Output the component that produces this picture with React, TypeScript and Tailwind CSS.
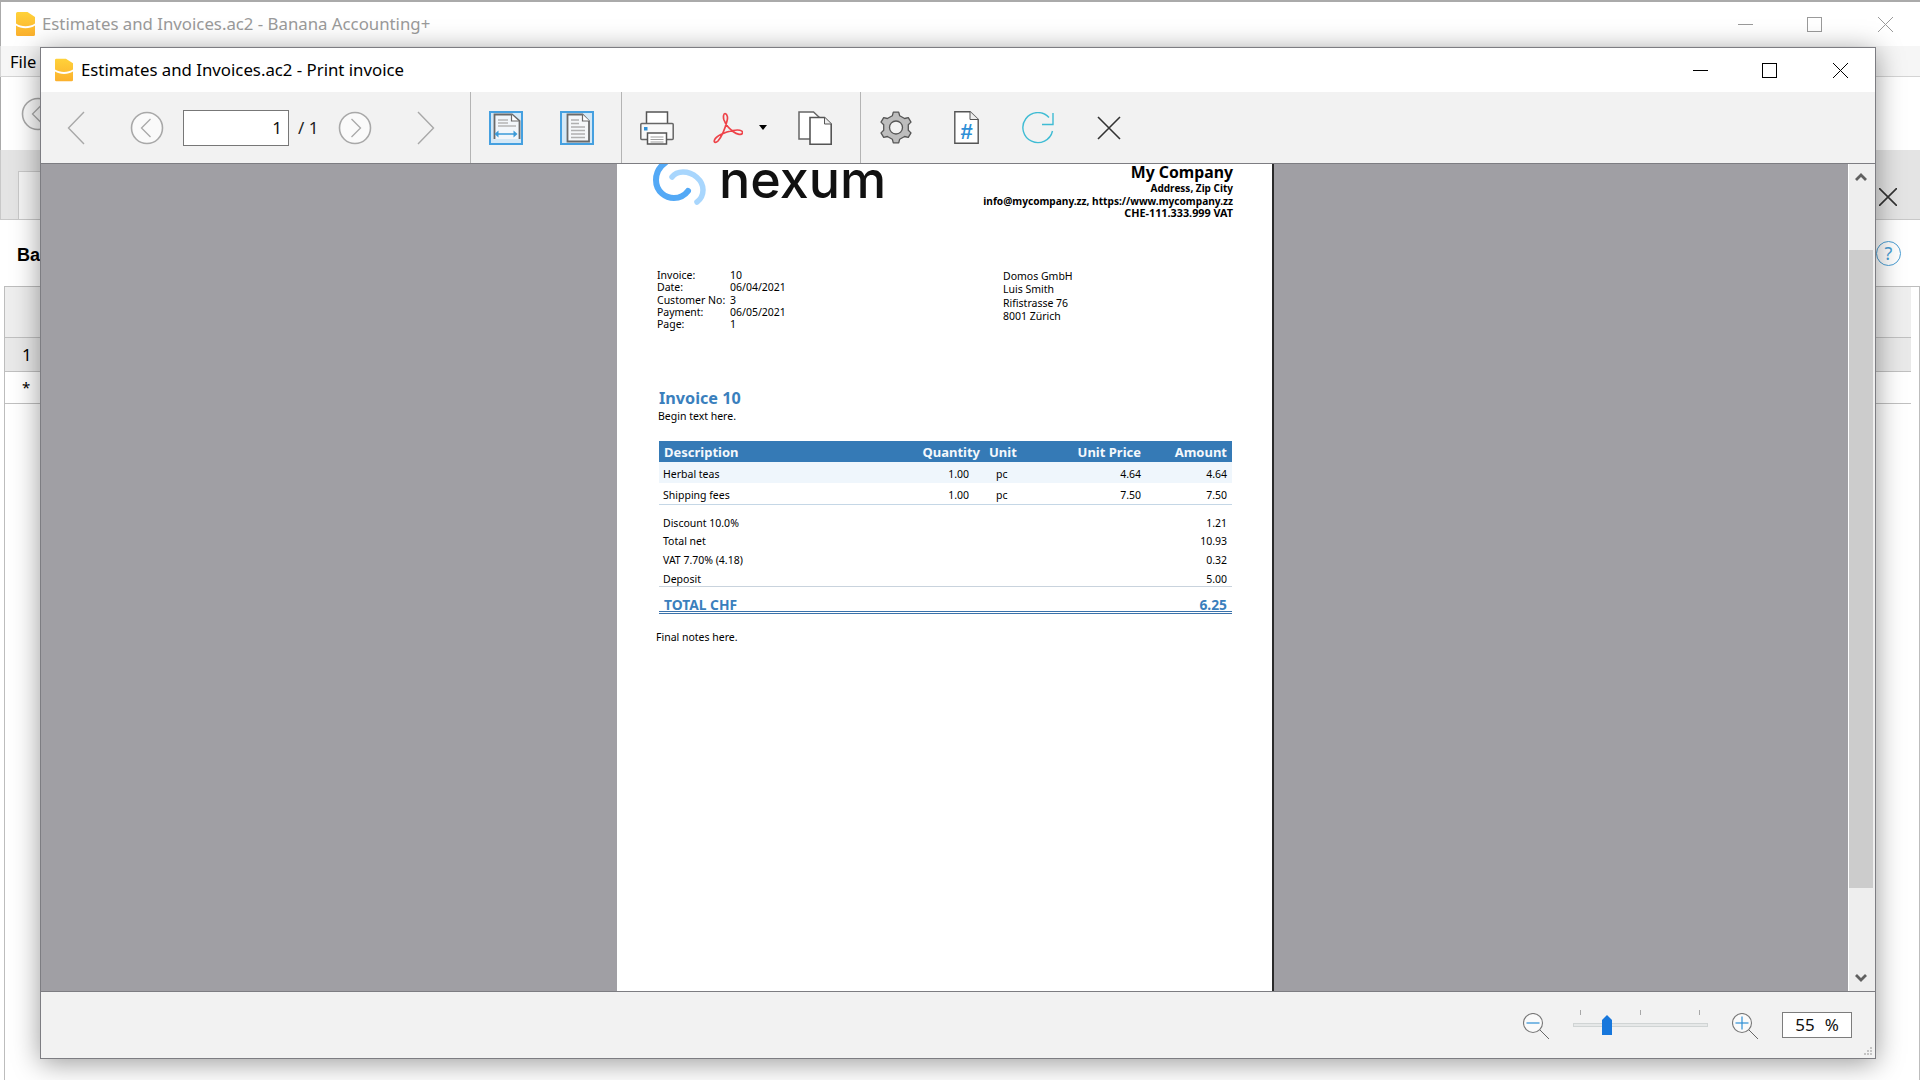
const ui = "font-['Noto_Sans','Open_Sans',sans-serif]";
const doc = "font-['Noto_Sans','Liberation_Sans',sans-serif]";

function BananaIcon({ id, className }: { id: string; className: string }) {
    return (
        <svg viewBox="0 0 19 24" className={className}>
            <defs>
                <linearGradient id={id} x1="0" y1="0" x2="0" y2="1">
                    <stop offset="0" stopColor="#ffd23a" />
                    <stop offset="1" stopColor="#fbb02d" />
                </linearGradient>
            </defs>
            <path d="M1.5 0H11.5L19 5V22.5A1.5 1.5 0 0 1 17.5 24H1.5A1.5 1.5 0 0 1 0 22.5V1.5A1.5 1.5 0 0 1 1.5 0Z" fill={`url(#${id})`} />
            <path d="M0 11.5C5 15 14 15 19 11.5V13.5C14 17 5 17 0 13.5Z" fill="#ffffff" />
        </svg>
    );
}

function WindowControls({ gapA, gapB, right }: { gapA: string; gapB: string; right: string }) {
    return (
        <div className={`ml-auto flex items-center ${right}`}>
            <svg viewBox="0 0 15 15" className="h-[15px] w-[15px]">
                <path d="M0 7.5H15" stroke="currentColor" strokeWidth="1" />
            </svg>
            <svg viewBox="0 0 15 15" className={`h-[15px] w-[15px] ${gapA}`}>
                <rect x="0.5" y="0.5" width="14" height="14" fill="none" stroke="currentColor" strokeWidth="1" />
            </svg>
            <svg viewBox="0 0 15 15" className={`h-[15px] w-[15px] ${gapB}`}>
                <path d="M0 0L15 15M15 0L0 15" stroke="currentColor" strokeWidth="1" />
            </svg>
        </div>
    );
}

function GearIcon() {
    // six-lobed gear, corners computed from the angle
    const pts: string[] = [];
    for (let i = 0; i < 6; i++) {
        const a = (Math.PI / 3) * i + Math.PI / 6;
        [-0.3, -0.17, 0.17, 0.3].forEach((d, j) => {
            const r = j === 0 || j === 3 ? 12.6 : 16;
            pts.push(`${(17 + r * Math.cos(a + d)).toFixed(1)},${(16.5 + r * 0.97 * Math.sin(a + d)).toFixed(1)}`);
        });
    }
    return (
        <svg viewBox="0 0 34 33" className="h-[33px] w-[34px]">
            <polygon points={pts.join(' ')} fill="#bdbdbd" stroke="#555555" strokeWidth="1.3" strokeLinejoin="round" />
            <circle cx="17" cy="16.5" r="6.5" fill="#f2f2f2" stroke="#555555" strokeWidth="1.3" />
        </svg>
    );
}

function ToggleButton({ wide }: { wide?: boolean }) {
    return (
        <div className="flex h-[34px] w-[34px] items-center justify-center border-2 border-[#45a0e0] bg-[#d4e8f6]">
            <svg viewBox="0 0 30 30" className="h-[30px] w-[30px]">
                <path
                    d={wide ? 'M3.5 26V1.5H21L28.5 8V26' : 'M5.5 28.5V1.5H20.5L27 8V28.5Z'}
                    fill={wide ? '#f2f6fa' : '#f5f7f9'}
                    stroke="#6a6a6a"
                    strokeWidth="1.8"
                />
                <path d="M20.5 1.5V8H27.5" fill="#ffffff" stroke="#6a6a6a" strokeWidth="1.2" />
                {wide ? (
                    <>
                        <path d="M7 7H17M7 10H17M7 13H25" stroke="#b5b5b5" strokeWidth="1.3" />
                        <path d="M5 21H25" stroke="#3a9ad9" strokeWidth="1.5" />
                        <path d="M7.5 17.5L3.5 21L7.5 24.5ZM22.5 17.5L26.5 21L22.5 24.5Z" fill="#3a9ad9" />
                    </>
                ) : (
                    <path d="M9 7H17M9 10.5H17M9 14H23M9 17.5H23M9 21H23M9 24.5H23" stroke="#b0b0b0" strokeWidth="1.4" />
                )}
            </svg>
        </div>
    );
}

function Toolbar() {
    return (
        <div className={`flex h-[71px] shrink-0 items-center bg-[#f2f2f2] ${ui}`}>
            <div className="flex h-full w-[430px] shrink-0 items-center border-r border-[#b4b4b4]">
                <svg viewBox="0 0 18 34" className="ml-[26px] h-[34px] w-[18px]">
                    <path d="M17 1L1.5 17L17 33" fill="none" stroke="#a8a8a8" strokeWidth="1.4" />
                </svg>
                <svg viewBox="0 0 34 34" className="ml-[45px] h-[34px] w-[34px]">
                    <circle cx="17" cy="17" r="15.5" fill="#fafafa" stroke="#a8a8a8" strokeWidth="1.6" />
                    <path d="M20.5 8L11.5 17L20.5 26" fill="none" stroke="#a8a8a8" strokeWidth="1.3" />
                </svg>
                <div className="ml-[19px] flex h-[36px] w-[106px] items-center justify-end border border-[#777777] bg-white pr-[6px] text-[17px] text-[#111111]">
                    1
                </div>
                <span className="ml-[9px] w-[40px] text-[17px] text-[#222222]">/ 1</span>
                <svg viewBox="0 0 34 34" className="h-[34px] w-[34px]">
                    <circle cx="17" cy="17" r="15.5" fill="#fafafa" stroke="#a8a8a8" strokeWidth="1.6" />
                    <path d="M13.5 8L22.5 17L13.5 26" fill="none" stroke="#a8a8a8" strokeWidth="1.3" />
                </svg>
                <svg viewBox="0 0 18 34" className="ml-[45px] h-[34px] w-[18px]">
                    <path d="M1 1L16.5 17L1 33" fill="none" stroke="#a8a8a8" strokeWidth="1.4" />
                </svg>
            </div>

            <div className="flex h-full w-[151px] shrink-0 items-center gap-[37px] border-r border-[#b4b4b4] pl-[18px]">
                <ToggleButton wide />
                <ToggleButton />
            </div>

            <div className="flex h-full w-[239px] shrink-0 items-center border-r border-[#b4b4b4] pl-[18px]">
                <svg viewBox="0 0 34 34" className="h-[34px] w-[34px]">
                    <rect x="6.5" y="1" width="21" height="14" fill="#ffffff" stroke="#555555" strokeWidth="1.5" />
                    <rect x="0.8" y="12.5" width="32.4" height="16" rx="1" fill="#f8f8f8" stroke="#666666" strokeWidth="1.5" />
                    <rect x="4" y="16" width="3.5" height="3.5" fill="#2e8fd6" />
                    <rect x="7.5" y="22" width="19" height="11" fill="#ffffff" stroke="#555555" strokeWidth="1.5" />
                    <path d="M10.5 26H23.5M10.5 28.5H23.5M10.5 31H23.5" stroke="#a0a0a0" strokeWidth="1.2" />
                </svg>
                <svg viewBox="0 0 30 32" className="ml-[39px] h-[32px] w-[30px]">
                    <path
                        d="M12 1.5C14.5 2 15 6 14 9C12.5 15 9 24 5 29C3 31 0.5 31 1.5 28C3 24 12 20 20 18.5C25 17.5 30 18 29.5 21C29 23.5 24 22.5 20 19.5C16 16.5 12.5 12 11 8C10 5 10.5 1.5 12 1.5Z"
                        fill="none"
                        stroke="#ee4349"
                        strokeWidth="1.7"
                    />
                </svg>
                <div className="ml-[16px] h-0 w-0 border-x-[4.5px] border-t-[5px] border-x-transparent border-t-black" />
                <svg viewBox="0 0 34 34" className="ml-[31px] h-[34px] w-[34px]">
                    <path d="M1 28V1H15.5L22 7V28Z" fill="#ffffff" stroke="#666666" strokeWidth="1.5" />
                    <path d="M12 33.2V6.5H26.5L33.2 13V33.2Z" fill="#ffffff" stroke="#555555" strokeWidth="1.6" />
                    <path d="M26.5 6.5V13H33.2" fill="#eeeeee" stroke="#555555" strokeWidth="1" />
                </svg>
            </div>

            <div className="ml-[18px] flex items-center">
                <GearIcon />
                <div className="relative ml-[41px] h-[33px] w-[25px]">
                    <svg viewBox="0 0 25 33" className="h-[33px] w-[25px]">
                        <path d="M0.8 32.2V0.8H16L24.2 8.5V32.2Z" fill="#ffffff" stroke="#555555" strokeWidth="1.4" />
                        <path d="M16 0.8V8.5H24.2" fill="#eeeeee" stroke="#555555" strokeWidth="1" />
                    </svg>
                    <span className="absolute inset-x-0 top-[11px] text-center font-['Liberation_Sans'] text-[22px] leading-[20px] font-bold text-[#2e8fd6]">#</span>
                </div>
                <svg viewBox="0 0 32 32" className="ml-[43px] h-[32px] w-[32px]">
                    <path d="M27 5.5A15 15 0 1 0 30.5 19" fill="none" stroke="#3fbcd4" strokeWidth="1.4" />
                    <path d="M31 1V12.5H20" fill="none" stroke="#3fbcd4" strokeWidth="1.4" />
                </svg>
                <svg viewBox="0 0 24 24" className="ml-[43px] h-[24px] w-[24px]">
                    <path d="M1 1L23 23M23 1L1 23" stroke="#333333" strokeWidth="1.6" />
                </svg>
            </div>
        </div>
    );
}

function InvoicePage() {
    const info = [
        ['Invoice:', '10'],
        ['Date:', '06/04/2021'],
        ['Customer No:', '3'],
        ['Payment:', '06/05/2021'],
        ['Page:', '1'],
    ];
    const rows = [
        ['Herbal teas', '1.00', 'pc', '4.64', '4.64'],
        ['Shipping fees', '1.00', 'pc', '7.50', '7.50'],
    ];
    const totals = [
        ['Discount 10.0%', '1.21', 'h-[18px]'],
        ['Total net', '10.93', 'h-[18px]'],
        ['VAT 7.70% (4.18)', '0.32', 'h-[19px]'],
    ];
    const cols = 'grid grid-cols-[256px_70px_60px_101px_86px] items-center';

    return (
        <div className={`h-full w-[655px] shrink-0 bg-white pl-[40px] shadow-[2px_0_0_#2a2a2a] ${doc} text-black`}>
            <div className="flex h-[105px] w-[576px] justify-between">
                <div className="-ml-[7px] flex h-[44px] items-start">
                    <svg viewBox="0 0 60 44" className="h-[44px] w-[60px]">
                        <path d="M16 -2C9 3 6 10 6 16C6 28 16 34 24 34C30 34 35 31 38 27" fill="none" stroke="#53a9f6" strokeWidth="6" strokeLinecap="round" />
                        <path d="M22 13C25 9 29 8 33 8C43 8 53 16 53 26C53 31 51 35 47 38" fill="none" stroke="#a8d6fd" strokeWidth="5.5" strokeLinecap="round" />
                    </svg>
                    <span className="ml-[9px] font-['Inter'] text-[52px] leading-[31px] font-medium text-[#111111]">nexum</span>
                </div>
                <div className="text-right font-bold">
                    <div className="h-[16px] text-[15.8px] leading-[16px]">My Company</div>
                    <div className="h-[15px] pt-[2px] text-[10px] leading-[13px]">Address, Zip City</div>
                    <div className="h-[12px] text-[10.15px] leading-[12px]">info@mycompany.zz, https://www.mycompany.zz</div>
                    <div className="h-[11px] text-[10.8px] leading-[12px]">CHE-111.333.999 VAT</div>
                </div>
            </div>

            <div className="flex h-[120px] pt-px text-[10.5px]">
                <div className="w-[346px]">
                    {info.map(([label, value]) => (
                        <div key={label} className="flex h-[12.2px] items-center">
                            <span className="w-[73px]">{label}</span>
                            <span>{value}</span>
                        </div>
                    ))}
                </div>
                <div className="leading-[13.4px]">
                    <div>Domos GmbH</div>
                    <div>Luis Smith</div>
                    <div>Rifistrasse 76</div>
                    <div>8001 Zürich</div>
                </div>
            </div>

            <div className="ml-[2px] h-[18px] text-[16.2px] leading-[18px] font-bold text-[#3a7fbd]">Invoice 10</div>
            <div className="ml-px h-[19px] text-[10.5px] leading-[18px]">Begin text here.</div>

            <div className="mt-[15px] ml-[2px] w-[573px] text-[10.5px]">
                <div className={`${cols} h-[21px] bg-[#357ab6] pt-[2px] text-[13px] font-bold text-[#f4f8fc]`}>
                    <span className="pl-[5px]">Description</span>
                    <span className="pr-[5px] text-right">Quantity</span>
                    <span className="pl-[4px]">Unit</span>
                    <span className="pr-[5px] text-right">Unit Price</span>
                    <span className="pr-[5px] text-right">Amount</span>
                </div>
                {rows.map((r, i) => (
                    <div key={r[0]} className={`${cols} ${i === 0 ? 'h-[21px] bg-[#eff6fc] pt-[4px]' : 'h-[22px] border-b border-[#c5d7e6] pt-[5px]'}`}>
                        <span className="pl-[4px]">{r[0]}</span>
                        <span className="pr-[16px] text-right">{r[1]}</span>
                        <span className="pl-[11px]">{r[2]}</span>
                        <span className="pr-[5px] text-right">{r[3]}</span>
                        <span className="pr-[5px] text-right">{r[4]}</span>
                    </div>
                ))}
                <div className="mt-[10px]">
                    {totals.map(([label, value, h]) => (
                        <div key={label} className={`flex items-center justify-between px-[4px] ${h}`}>
                            <span>{label}</span>
                            <span className="pr-px">{value}</span>
                        </div>
                    ))}
                    <div className="flex h-[17px] items-center justify-between border-b border-[#c9d3dd] px-[4px] pt-[3px]">
                        <span>Deposit</span>
                        <span className="pr-px">5.00</span>
                    </div>
                </div>
                <div className="flex h-[27px] items-end justify-between border-b-[3px] border-double border-[#3a72ab] px-[5px] text-[13.8px] leading-[12px] font-bold text-[#3a7fbd]">
                    <span>TOTAL CHF</span>
                    <span>6.25</span>
                </div>
            </div>
            <div className="mt-[14px] -ml-px text-[10.5px] leading-[18px]">Final notes here.</div>
        </div>
    );
}

function ZoomIcon({ plus }: { plus?: boolean }) {
    return (
        <svg viewBox="0 0 26 29" className="h-[29px] w-[26px]">
            <circle cx="10" cy="10" r="9.5" fill="#fafafa" stroke="#777777" strokeWidth="1.1" />
            <path d="M3.5 10H16.5" stroke="#2e8fd6" strokeWidth="1.2" />
            {plus && <path d="M10 3.5V16.5" stroke="#2e8fd6" strokeWidth="1.2" />}
            <path d="M17 17L26 26" stroke="#666666" strokeWidth="1" />
        </svg>
    );
}

function Dialog() {
    return (
        <div className="absolute top-[47px] left-[40px] flex h-[1012px] w-[1836px] flex-col border border-[#7d7d82] bg-white shadow-[0_4px_26px_rgba(0,0,0,0.4)]">
            <div className={`flex h-[44px] shrink-0 items-center ${ui} text-black`}>
                <BananaIcon id="dialog-banana" className="ml-[14px] h-[24px] w-[18px]" />
                <span className="ml-[8px] text-[16.8px]">Estimates and Invoices.ac2 - Print invoice</span>
                <WindowControls gapA="ml-[54px]" gapB="ml-[56px]" right="mr-[27px]" />
            </div>
            <Toolbar />
            <div className="flex min-h-0 flex-1 border-y border-[#7d7d82] bg-[#a09fa4]">
                <div className="flex min-w-0 flex-1 justify-center overflow-hidden">
                    <InvoicePage />
                </div>
                <div className="flex w-[27px] shrink-0 flex-col border-l border-white bg-[#eeeeee] pr-[2px]">
                    <div className="flex h-[86px] justify-center pt-[9px]">
                        <svg viewBox="0 0 12 8" className="h-[8px] w-[12px]">
                            <path d="M1 7L6 2L11 7" fill="none" stroke="#606060" strokeWidth="2.8" />
                        </svg>
                    </div>
                    <div className="h-[638px] bg-[#cccccc]" />
                    <div className="flex flex-1 items-end justify-center pb-[9px]">
                        <svg viewBox="0 0 12 8" className="h-[8px] w-[12px]">
                            <path d="M1 1L6 6L11 1" fill="none" stroke="#606060" strokeWidth="2.8" />
                        </svg>
                    </div>
                </div>
            </div>
            <div className={`relative flex h-[66px] shrink-0 items-center justify-end bg-[#f2f2f2] pr-[23px] ${ui}`}>
                <div className="mt-[4px]">
                    <ZoomIcon />
                </div>
                <div className="relative ml-[24px] h-[30px] w-[135px]">
                    <div className="absolute top-0 left-[7px] h-[5px] w-px bg-[#a8a8a8]" />
                    <div className="absolute top-0 left-[67px] h-[5px] w-px bg-[#a8a8a8]" />
                    <div className="absolute top-0 left-[126px] h-[5px] w-px bg-[#a8a8a8]" />
                    <div className="absolute top-[13px] left-0 h-[4px] w-[135px] border border-[#d0d4d4] bg-[#e6e8e8]" />
                    <div className="absolute top-[5px] left-[29px] h-[20px] w-[10px] bg-[#1777dc] [clip-path:polygon(50%_0,100%_25%,100%_100%,0_100%,0_25%)]" />
                </div>
                <div className="mt-[4px] ml-[24px]">
                    <ZoomIcon plus />
                </div>
                <div className="ml-[24px] flex h-[26px] w-[70px] items-center justify-center gap-[10px] border border-[#7d7d7d] bg-white text-[17px] text-[#111111]">
                    <span>55</span>
                    <span>%</span>
                </div>
                <div className="absolute right-[3px] bottom-[3px] grid grid-cols-3 gap-px">
                    {['', '', 'a', '', 'a', 'a', 'a', 'a', 'a'].map((c, i) => (
                        <div key={i} className={c ? 'h-[2px] w-[2px] bg-[#c4c4c4]' : 'h-[2px] w-[2px]'} />
                    ))}
                </div>
            </div>
        </div>
    );
}

export default function App() {
    return (
        <div className={`relative h-[1080px] w-[1920px] overflow-hidden bg-white ${ui}`}>
            <div className="flex h-full flex-col border-t-2 border-[#aaaaaa]">
                <div className="flex h-[44px] shrink-0 items-center border-l border-[#aaaaaa]">
                    <BananaIcon id="main-banana" className="ml-[15px] h-[24px] w-[19px]" />
                    <span className="ml-[7px] text-[16.8px] text-[#9a9a9a]">Estimates and Invoices.ac2 - Banana Accounting+</span>
                    <div className="ml-auto text-[#9a9a9a]">
                        <WindowControls gapA="ml-[54px]" gapB="ml-[56px]" right="mr-[27px]" />
                    </div>
                </div>
                <div className="flex h-[31px] shrink-0 items-center border-b border-l border-[#d4d4d4] bg-[#f6f6f6] pt-[2px] pl-[9px] text-[16.5px] text-black">File</div>
                <div className="flex h-[73px] shrink-0 items-center border-l border-[#aaaaaa] bg-white pl-[20px]">
                    <svg viewBox="0 0 34 34" className="h-[34px] w-[34px]">
                        <circle cx="17" cy="17" r="15.5" fill="#fafafa" stroke="#a8a8a8" strokeWidth="1.6" />
                        <path d="M20.5 8L11.5 17L20.5 26" fill="none" stroke="#a8a8a8" strokeWidth="1.3" />
                    </svg>
                </div>
                <div className="flex h-[70px] shrink-0 items-end justify-end border-b border-l border-[#c8c8c8] bg-[#e4e4e4] pl-[17px]">
                    <div className="mr-auto h-[48px] w-[300px] border-t border-l border-[#c8c8c8] bg-[#f4f4f4]" />
                    <svg viewBox="0 0 18 18" className="mr-[23px] mb-[13px] h-[18px] w-[18px]">
                        <path d="M0 0L18 18M18 0L0 18" stroke="#333333" strokeWidth="1.6" />
                    </svg>
                </div>
                <div className="flex h-[66px] shrink-0 items-center justify-between pl-[17px]">
                    <span className="pt-[5px] font-['Liberation_Sans'] text-[18px] font-bold text-black">Basic</span>
                    <div className="mr-[19px] flex h-[25px] w-[25px] items-center justify-center rounded-full border border-[#4b9fd5] text-[18px] leading-none text-[#4b9fd5]">?</div>
                </div>
                <div className="ml-[4px] flex-1 border-t border-r border-l border-[#bdbdbd] pr-[8px]">
                    <div className="h-[50px] bg-[#eeeeee]" />
                    <div className="flex h-[34px] items-center border-t border-[#c0c0c0] bg-[#e9e9e9] pl-[17px] text-[17px]">1</div>
                    <div className="flex h-[33px] items-center border-y border-[#c0c0c0] bg-white pl-[17px] text-[15px]">*</div>
                </div>
            </div>
            <Dialog />
        </div>
    );
}
